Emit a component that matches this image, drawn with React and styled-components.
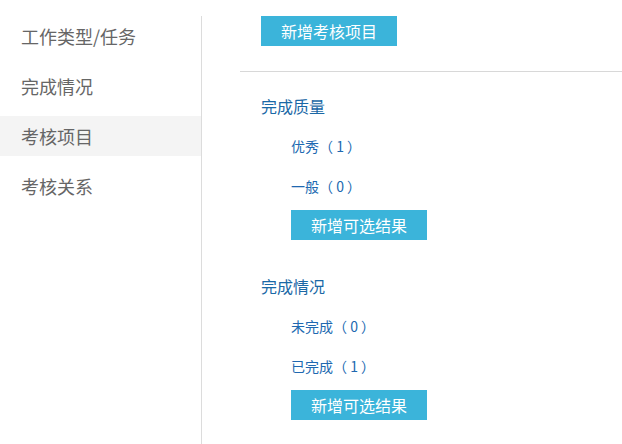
import React, { useState } from 'react';
import styled, { createGlobalStyle } from 'styled-components';

const GlobalStyle = createGlobalStyle`
    html, body {
        margin: 0;
        padding: 0;
        background: #fff;
    }
    body {
        font-family: "Microsoft YaHei", "Noto Sans CJK SC", "Noto Sans", sans-serif;
    }
`;

const navList = ['工作类型/任务', '完成情况', '考核项目', '考核关系'];

const sections = [
    { title: '完成质量', options: [{ name: '优秀', count: 1 }, { name: '一般', count: 0 }] },
    { title: '完成情况', options: [{ name: '未完成', count: 0 }, { name: '已完成', count: 1 }] },
];

function App() {
    const [active, setActive] = useState(2);

    return (
        <>
        <GlobalStyle />
        <Page>
            <Sidebar>
                {navList.map((name, i) => (
                    <NavItem key={name} active={i === active} onClick={() => setActive(i)}>
                        {name}
                    </NavItem>
                ))}
            </Sidebar>
            <Main>
                <Header>
                    <Button>新增考核项目</Button>
                </Header>
                <Divider />
                {sections.map(section => (
                    <Section key={section.title}>
                        <SectionTitle>{section.title}</SectionTitle>
                        {section.options.map(opt => (
                            <Option key={opt.name}>
                                {opt.name}<Count>（ {opt.count} ）</Count>
                            </Option>
                        ))}
                        <OptionButton>新增可选结果</OptionButton>
                    </Section>
                ))}
            </Main>
        </Page>
        </>
    );
}

const Page = styled.div`
    display: flex;
    width: 622px;
    height: 444px;
    overflow: hidden;
`;

const Sidebar = styled.nav`
    width: 201px;
    flex-shrink: 0;
    margin-top: 16px;
    border-right: 1px solid #dcdcdc;
    display: flex;
    flex-direction: column;
    gap: 10px;
`;

const NavItem = styled.div`
    height: 40px;
    line-height: 40px;
    padding-left: 21px;
    font-size: 18px;
    color: #666;
    background: ${props => props.active ? '#f4f4f4' : 'transparent'};
    cursor: pointer;
`;

const Main = styled.div`
    flex: 1;
    margin-left: 38px;
    padding-top: 16px;
`;

const Header = styled.div`
    padding-left: 21px;
    height: 55px;
`;

const Button = styled.button`
    height: 30px;
    width: 136px;
    border: none;
    padding: 0;
    background: #3bb4da;
    color: #fff;
    font-family: inherit;
    font-size: 16px;
    cursor: pointer;
`;

const Divider = styled.div`
    border-top: 1px solid #d8d8d8;
`;

const Section = styled.section`
    display: flex;
    flex-direction: column;
    align-items: flex-start;
    padding-left: 21px;
    margin-top: 14px;
    & + & {
        margin-top: 26px;
    }
`;

const SectionTitle = styled.h3`
    margin: 0;
    height: 40px;
    line-height: 40px;
    font-size: 16px;
    font-weight: normal;
    color: #1a68a6;
`;

const Option = styled.div`
    height: 40px;
    line-height: 40px;
    padding-left: 30px;
    font-size: 14px;
    color: #2068b0;
`;

const Count = styled.span`
    white-space: pre;
`;

const OptionButton = styled(Button)`
    margin-top: 4px;
    margin-left: 30px;
`;

export default App;
